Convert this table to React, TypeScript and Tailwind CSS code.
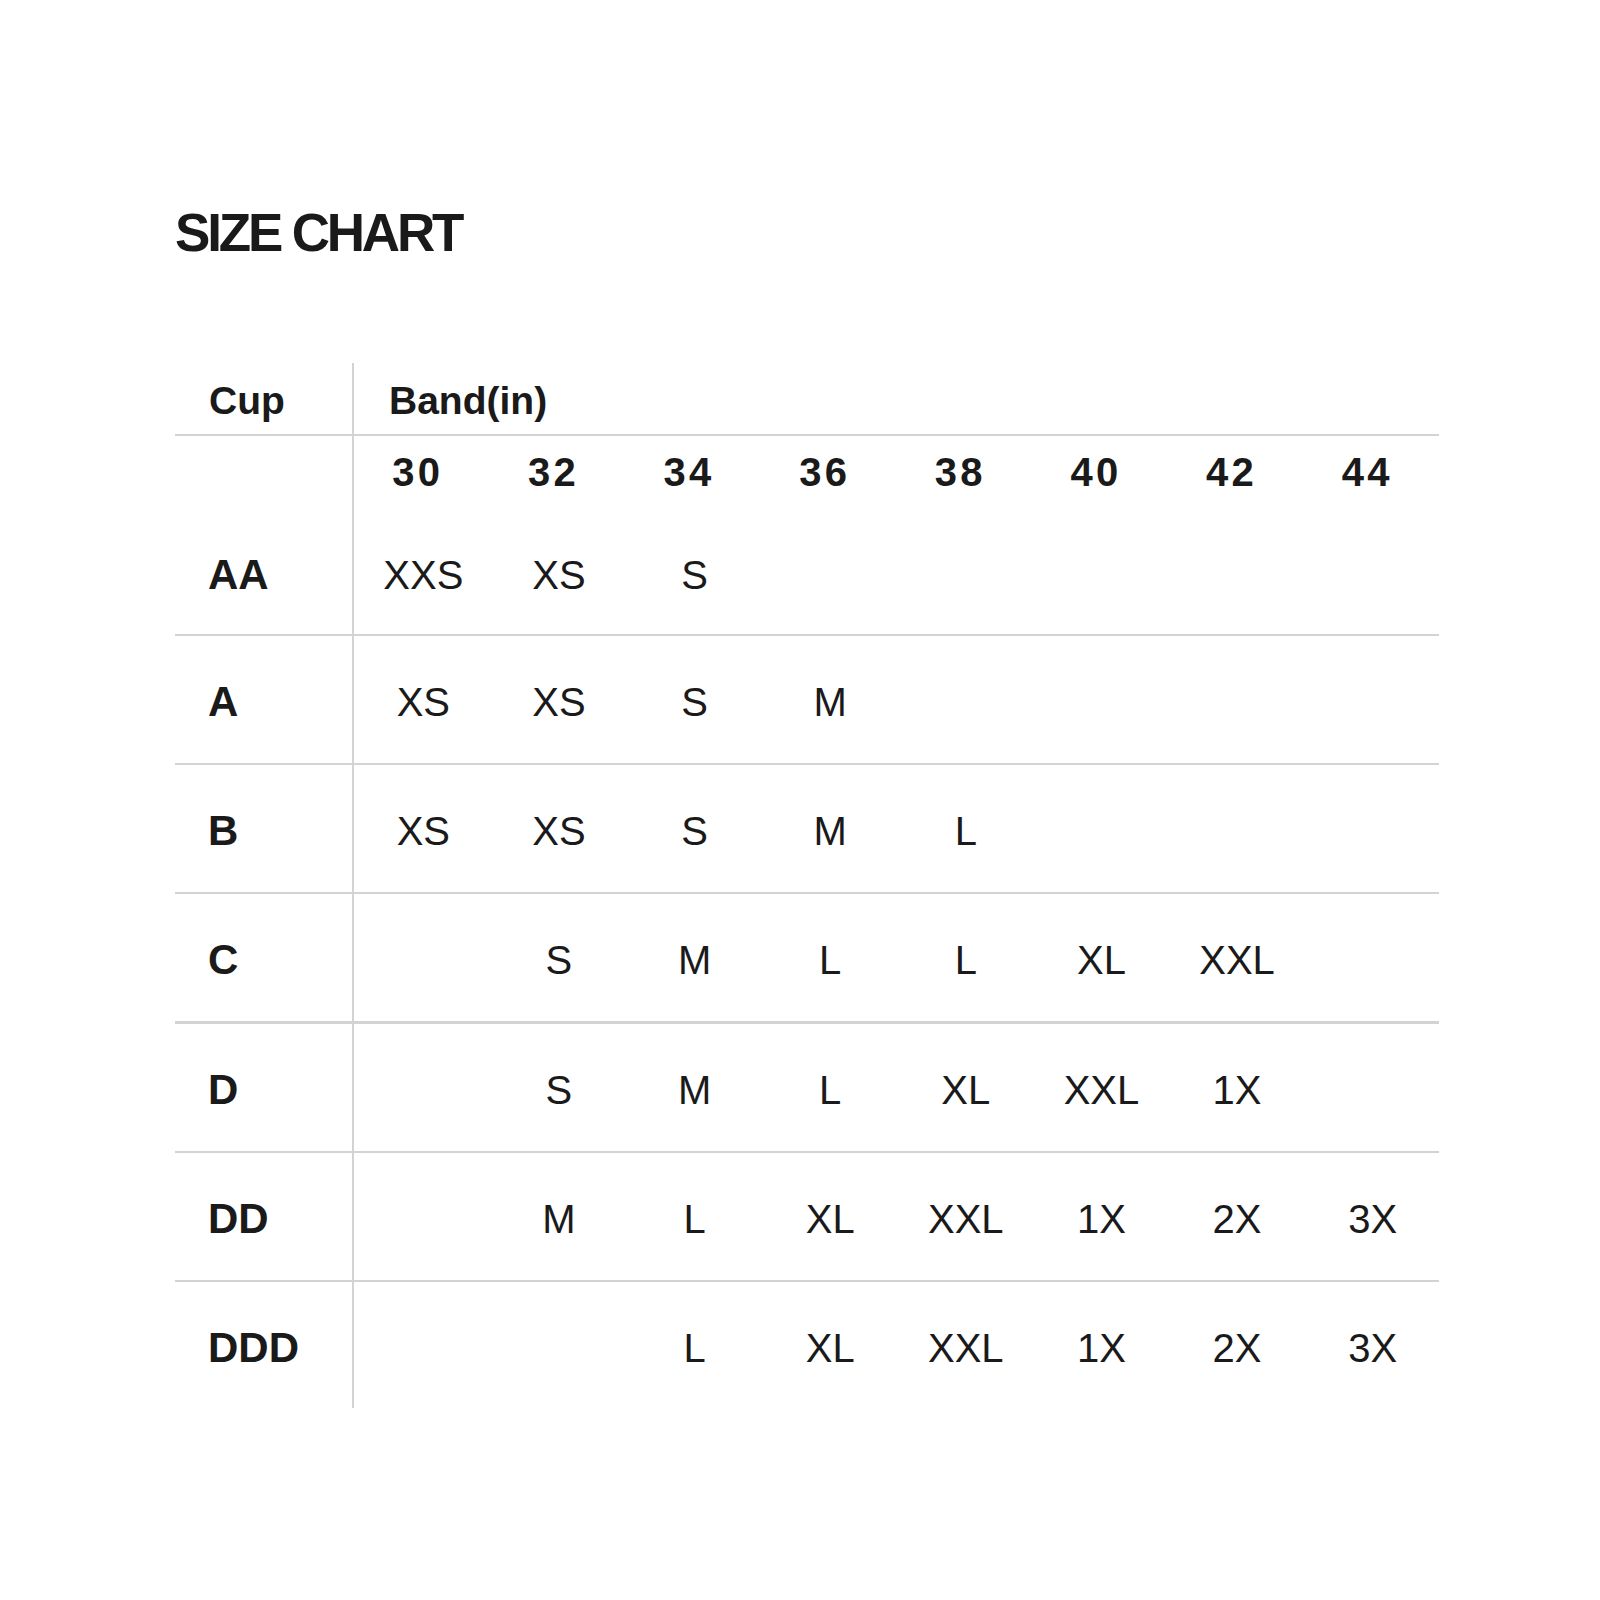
const bands = ['30', '32', '34', '36', '38', '40', '42', '44']

const rows: { cup: string; sizes: string[]; thick?: boolean }[] = [
  { cup: 'A', sizes: ['XS', 'XS', 'S', 'M', '', '', '', ''] },
  { cup: 'B', sizes: ['XS', 'XS', 'S', 'M', 'L', '', '', ''] },
  { cup: 'C', sizes: ['', 'S', 'M', 'L', 'L', 'XL', 'XXL', ''], thick: true },
  { cup: 'D', sizes: ['', 'S', 'M', 'L', 'XL', 'XXL', '1X', ''] },
  { cup: 'DD', sizes: ['', 'M', 'L', 'XL', 'XXL', '1X', '2X', '3X'] },
  { cup: 'DDD', sizes: ['', '', 'L', 'XL', 'XXL', '1X', '2X', '3X'] },
]

function Line({ thick }: { thick?: boolean }) {
  return <div className={`w-full bg-[#d3d3d3] ${thick ? 'h-[3px]' : 'h-[2px]'}`} />
}

function Row({
  height,
  pad = '',
  left,
  children,
}: {
  height: string
  pad?: string
  left?: React.ReactNode
  children?: React.ReactNode
}) {
  return (
    <div className={`flex ${height}`}>
      <div className={`w-[177px] flex items-center pl-[33px] text-[42px] font-bold leading-none ${pad}`}>
        {left}
      </div>
      <div className="w-[2px] bg-[#d3d3d3]" />
      <div className={`flex-1 grid grid-cols-8 items-center ${pad}`}>{children}</div>
    </div>
  )
}

function Sizes({ sizes }: { sizes: string[] }) {
  return (
    <>
      {sizes.map((s, i) => (
        <div key={i} className="text-center text-[40px] leading-none pl-[3px]">
          {s}
        </div>
      ))}
    </>
  )
}

export default function App() {
  return (
    <div className="min-h-screen bg-white text-[#1a1a1a] font-['Liberation_Sans',Arial,sans-serif] pl-[175px] pt-[206px]">
      <h1 className="text-[53px] font-bold leading-none tracking-[-0.06em]">SIZE CHART</h1>

      <div className="w-[1264px] mt-[104px]">
        {/* header */}
        <div className="flex h-[71px]">
          <div className="w-[177px] flex items-center pl-[34px] pt-[4px] text-[39px] font-bold leading-none">
            Cup
          </div>
          <div className="w-[2px] bg-[#d3d3d3]" />
          <div className="flex-1 flex items-center pl-[35px] pt-[4px] text-[39px] font-bold leading-none">
            Band(in)
          </div>
        </div>
        <Line />

        <Row height="h-[72px]">
          {bands.map((b) => (
            <div
              key={b}
              className="text-center text-[40px] font-bold leading-none tracking-[0.08em] pr-[8px]"
            >
              {b}
            </div>
          ))}
        </Row>
        <Row height="h-[126px]" pad="pt-[8px]" left="AA">
          <Sizes sizes={['XXS', 'XS', 'S', '', '', '', '', '']} />
        </Row>

        {rows.map((r, i) => (
          <div key={r.cup}>
            <Line thick={rows[i - 1]?.thick} />
            <Row
              height={i === rows.length - 1 ? 'h-[126px]' : 'h-[127px]'}
              pad="pt-[5px]"
              left={r.cup}
            >
              <Sizes sizes={r.sizes} />
            </Row>
          </div>
        ))}
      </div>
    </div>
  )
}
